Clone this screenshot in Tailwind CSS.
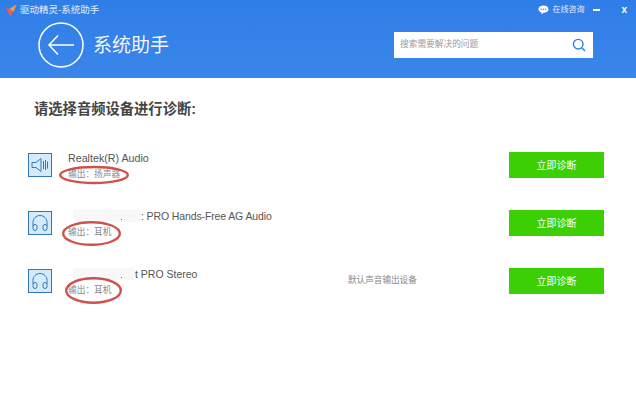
<!DOCTYPE html>
<html lang="en">
  <head>
    <meta charset="UTF-8" />
    <script src="https://cdn.jsdelivr.net/npm/@tailwindcss/browser@4"></script>
    <title>系统助手</title>
  </head>
  <body class="bg-white font-['Liberation_Sans','Noto_Sans_CJK_SC',sans-serif]">
    <div class="w-[636px] h-[400px] overflow-hidden bg-white">
      <header class="h-[78px] bg-gradient-to-b from-[#2f7ee8] to-[#3a86ea] text-white">
        <div class="h-[20px] flex items-center pl-[5px] pr-[9px]">
          <svg width="12" height="13" viewBox="0 0 12 13" class="mr-[3px]">
            <path d="M0.5 3 L4.5 5 L11.5 0.5 L8.5 7.5 L4.5 12.5 L3 7 Z" fill="#e8633a" />
            <path d="M4.5 5 L11.5 0.5 L8.5 7.5 Z" fill="#f0a050" />
          </svg>
          <span class="text-[9.5px] text-white/85">驱动精灵-系统助手</span>
          <div class="ml-auto flex items-center">
            <svg width="11" height="10" viewBox="0 0 11 10" class="mr-[3px]">
              <path d="M5.5 0.5 C8.5 0.5 10.5 2 10.5 4.2 C10.5 6.4 8.5 7.8 5.5 7.8 L3.5 9.6 L3.5 7.5 C1.6 7 0.5 5.8 0.5 4.2 C0.5 2 2.5 0.5 5.5 0.5 Z" fill="white" />
              <circle cx="3.4" cy="4.2" r="0.7" fill="#3a86ea" />
              <circle cx="5.5" cy="4.2" r="0.7" fill="#3a86ea" />
              <circle cx="7.6" cy="4.2" r="0.7" fill="#3a86ea" />
            </svg>
            <span class="text-[8px] text-white/85">在线咨询</span>
            <span class="ml-[9px] w-[7px] h-[2px] bg-white"></span>
            <span class="ml-[21px] text-[10px] font-bold leading-none">x</span>
          </div>
        </div>
        <div class="flex items-center pl-[38px] pr-[43px] h-[50px]">
          <svg width="46" height="46" viewBox="0 0 46 46" fill="none" stroke="white">
            <circle cx="23" cy="23" r="22" stroke-width="1.5" />
            <path d="M11 23 H36 M20 13.5 L11 23 L20 32.5" stroke-width="1.5" />
          </svg>
          <h1 class="ml-[9px] mt-[2px] text-[19px] text-white/95">系统助手</h1>
          <div class="ml-auto w-[199px] h-[26px] bg-white flex items-center pl-[6px] pr-[7px]">
            <span class="text-[8.7px] text-[#9a9a9a]">搜索需要解决的问题</span>
            <svg width="14" height="14" viewBox="0 0 14 14" fill="none" stroke="#2f7ee8" stroke-width="1.4" class="ml-auto">
              <circle cx="6.2" cy="6.2" r="4.8" />
              <path d="M9.8 9.8 L13 13" />
            </svg>
          </div>
        </div>
      </header>

      <main class="pl-[28px] pr-[32px]">
        <h2 class="pt-[21px] pl-[6px] h-[74px] text-[14.3px] leading-[20px] font-bold text-[#444]">请选择音频设备进行诊断:</h2>

        <div class="flex flex-col gap-[32px]">
          <div class="h-[26px] flex items-center">
            <div class="w-[24px] h-[24px] border border-[#3278b8] bg-[#d3ebfc] flex items-center justify-center">
              <svg width="18" height="16" viewBox="0 0 18 16" fill="none" stroke="#3278b8">
                <path d="M1 5.5 H5 L10 1.5 V14.5 L5 10.5 H1 Z" />
                <path d="M12.5 4 V12 M14.5 3 V13 M16.5 4.5 V11.5" />
              </svg>
            </div>
            <div class="relative ml-[16px] w-[180px] self-start -mt-[1px]">
              <p class="text-[10.7px] leading-[14px] text-[#555]">Realtek(R) Audio</p>
              <p class="text-[8.7px] leading-[14px] text-[#888] mt-[2px]">输出&#xFF1A;扬声器</p>
              <svg width="72" height="20" viewBox="0 0 72 20" fill="none" class="absolute left-[-10px] top-[14px]">
                <ellipse cx="36" cy="10" rx="33.8" ry="8" stroke="#d0504a" stroke-width="2.4" />
              </svg>
            </div>
            <button class="ml-auto w-[95px] h-[26px] bg-[#3ccf04] text-[10px] text-white">立即诊断</button>
          </div>

          <div class="h-[26px] flex items-center">
            <div class="w-[24px] h-[24px] border border-[#3278b8] bg-[#d3ebfc] flex items-center justify-center">
              <svg width="18" height="18" viewBox="0 0 18 18" fill="none" stroke="#3278b8">
                <path d="M2 12 V8.5 C2 4.5 5 1.5 9 1.5 C13 1.5 16 4.5 16 8.5 V12" />
                <rect x="2" y="10.5" width="4" height="6" rx="2" />
                <rect x="12" y="10.5" width="4" height="6" rx="2" />
              </svg>
            </div>
            <div class="relative ml-[16px] w-[240px] self-start -mt-[1px]">
              <p class="text-[10.5px] leading-[14px] text-[#555] flex items-center">
                <span class="ml-[5px] w-[68px] h-[12px] bg-[#f8f8f8]"></span>
                <span class="tracking-[-0.12px]">: PRO Hands-Free AG Audio</span>
              </p>
              <span class="absolute left-[53px] top-[10px] w-[1px] h-[1px] bg-[#666]"></span>
              <p class="text-[8.7px] leading-[14px] text-[#888] mt-[2px]">输出&#xFF1A;耳机</p>
              <svg width="61" height="27" viewBox="0 0 61 27" fill="none" class="absolute left-[-7px] top-[11px]">
                <ellipse cx="30.5" cy="13.5" rx="28.3" ry="11.3" stroke="#d0504a" stroke-width="2.4" />
              </svg>
            </div>
            <button class="ml-auto w-[95px] h-[26px] bg-[#3ccf04] text-[10px] text-white">立即诊断</button>
          </div>

          <div class="h-[26px] flex items-center">
            <div class="w-[24px] h-[24px] border border-[#3278b8] bg-[#d3ebfc] flex items-center justify-center">
              <svg width="18" height="18" viewBox="0 0 18 18" fill="none" stroke="#3278b8">
                <path d="M2 12 V8.5 C2 4.5 5 1.5 9 1.5 C13 1.5 16 4.5 16 8.5 V12" />
                <rect x="2" y="10.5" width="4" height="6" rx="2" />
                <rect x="12" y="10.5" width="4" height="6" rx="2" />
              </svg>
            </div>
            <div class="relative ml-[16px] w-[280px] self-start -mt-[1px]">
              <p class="text-[10.5px] leading-[14px] text-[#555] flex items-center">
                <span class="ml-[5px] w-[62px] h-[12px] bg-[#f8f8f8]"></span>
                <span>t PRO Stereo</span>
              </p>
              <span class="absolute left-[53px] top-[10px] w-[1px] h-[1px] bg-[#666]"></span>
              <p class="text-[8.7px] leading-[14px] text-[#888] mt-[2px]">输出&#xFF1A;耳机</p>
              <svg width="59" height="29" viewBox="0 0 59 29" fill="none" class="absolute left-[-4px] top-[9px]">
                <ellipse cx="29.5" cy="14.5" rx="27.3" ry="12.3" stroke="#d0504a" stroke-width="2.4" />
              </svg>
            </div>
            <span class="text-[8.6px] text-[#888] mb-[2px]">默认声音输出设备</span>
            <button class="ml-auto w-[95px] h-[26px] bg-[#3ccf04] text-[10px] text-white">立即诊断</button>
          </div>
        </div>
      </main>
    </div>
  </body>
</html>
